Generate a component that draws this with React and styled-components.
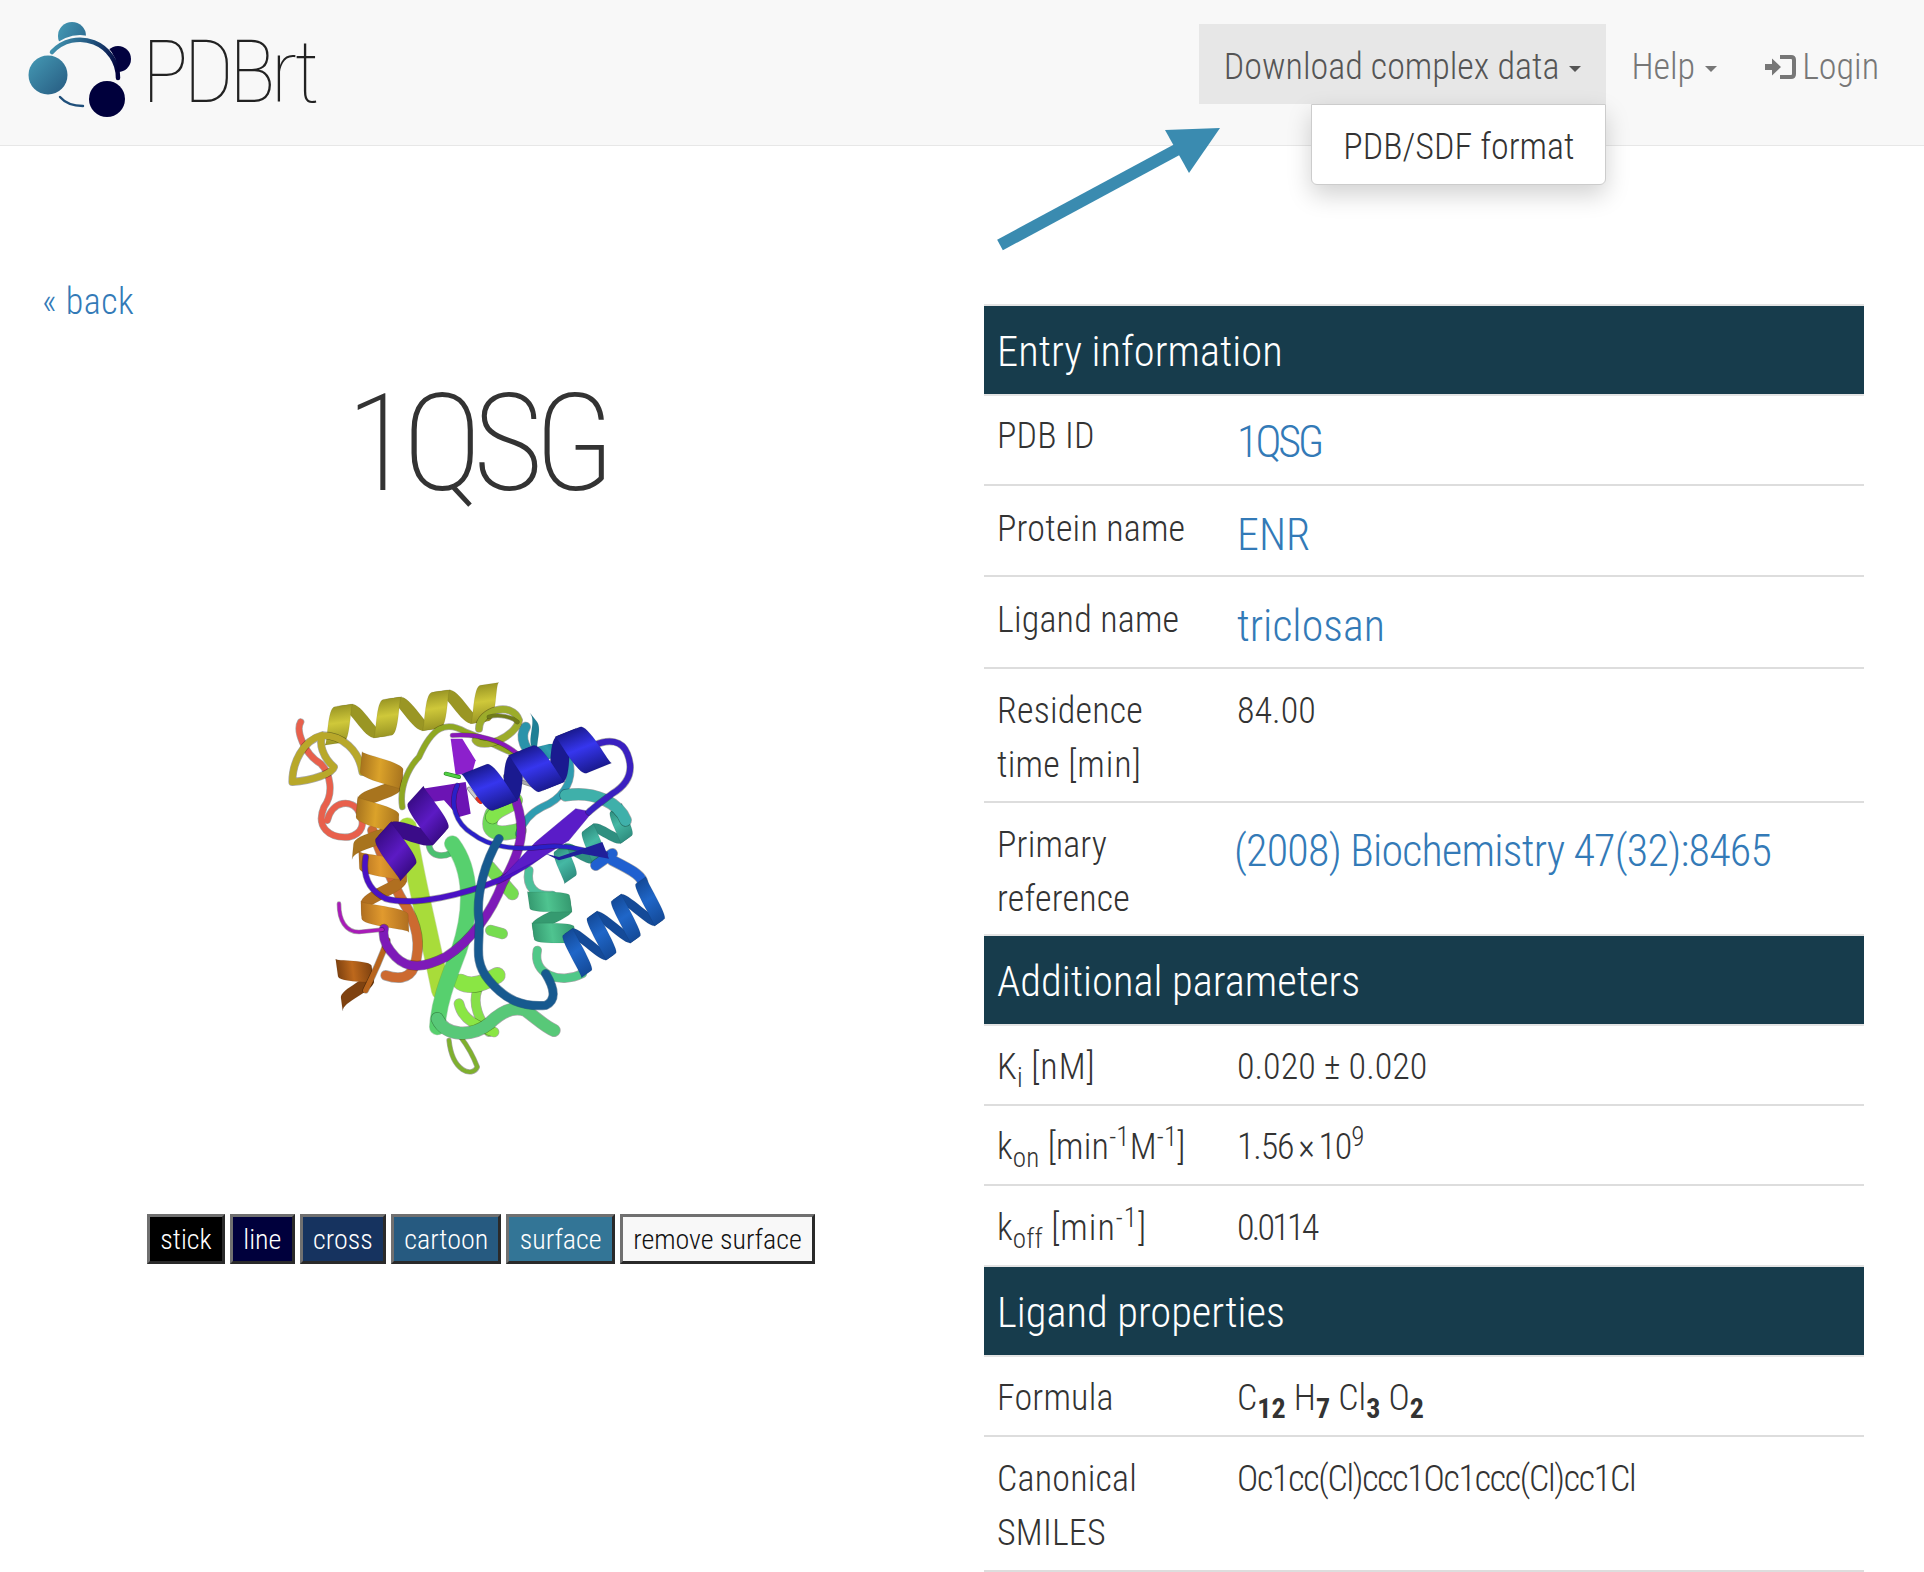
import React from 'react';
import styled, { createGlobalStyle } from 'styled-components';

const Global = createGlobalStyle`
  html, body { margin: 0; padding: 0; background: #fff; }
  body { font-family: "Roboto", "Liberation Sans", sans-serif; font-weight: 300; font-stretch: 75%; color: #333; overflow-x: hidden; }
`;
const Page = styled.div`position: relative; width: 1924px; height: 1572px; overflow: hidden;`;
const Navbar = styled.header`
  height: 146px; box-sizing: border-box; background: #f8f8f8; border-bottom: 1px solid #e7e7e7;
  display: flex; align-items: flex-start; justify-content: space-between; padding: 24px 45px 0 28px;
`;
const Brand = styled.div`display: flex; align-items: center; gap: 2px; margin-top: -2px;`;
const BrandName = styled.span`
  font-size: 88px; font-weight: 100; color: #222; line-height: 100px; letter-spacing: -5px;
`;
const NavList = styled.nav`display: flex; align-items: stretch; height: 80px;`;
const NavItem = styled.div`
  position: relative; display: flex; align-items: center; gap: ${p => p.$gap ?? 10}px; padding: 6px ${p => p.$pr ?? 25}px 0 ${p => p.$pl ?? 25}px;
  background: ${p => (p.$open ? '#e7e7e7' : 'transparent')}; color: ${p => (p.$open ? '#555' : '#777')};
  font-size: 36px; white-space: nowrap;
`;
const Caret = styled.i`
  display: inline-block; width: 0; height: 0; border-top: 6px solid currentColor;
  border-left: 6px solid transparent; border-right: 6px solid transparent; margin-top: 4px;
`;
const Dropdown = styled.div`
  position: absolute; top: 80px; right: 0; width: 295px; height: 81px; box-sizing: border-box; padding-top: 4px;
  background: #fff; border: 1px solid #ccc; border-radius: 0 0 6px 6px;
  box-shadow: 0 10px 24px rgba(0,0,0,.18); display: flex; align-items: center; justify-content: center;
  font-size: 36px; color: #333; z-index: 3;
`;
const Arrow = styled.svg`position: absolute; left: 990px; top: 120px; z-index: 4;`;
const Main = styled.main`display: grid; grid-template-columns: 962px 880px; column-gap: 22px; padding-top: 160px;`;
const LeftCol = styled.section`display: flex; flex-direction: column; align-items: center;`;
const Back = styled.a`
  align-self: flex-start; margin: -29px 0 0 42px; color: #337ab7; font-size: 36px; line-height: 50px; letter-spacing: .5px;
`;
const Title = styled.h1`
  margin: 42px 10px 0 0; font-size: 135px; font-weight: 200; line-height: 150px; color: #333; letter-spacing: -9px;
`;
const Protein = styled.svg`display: block; margin: 138px 25px 0 0;`;
const Buttons = styled.div`display: flex; gap: 5px; margin-top: 127px;`;
const ViewButton = styled.button`
  height: 50px; padding: 0 10.3px; box-sizing: border-box; border-width: 3px; border-style: solid;
  border-color: #707070 #2a2a2a #2a2a2a #707070;
  background: ${p => p.$bg}; color: ${p => (p.$dark ? '#111' : '#fff')};
  font: 300 28px "Roboto", sans-serif; font-stretch: 75%;
`;
const Table = styled.table`width: 880px; border-collapse: collapse; table-layout: fixed; margin-top: -2px; align-self: start;`;
const Head = styled.th`
  height: 86px; padding: 2px 13px 0; background: #173c4c; color: #fff; text-align: left;
  font-size: 42.5px; font-weight: 300; border-top: 2px solid #e4e4e4; border-bottom: 2px solid #e4e4e4;
`;
const Row = styled.tr`border-bottom: 2px solid #ddd;`;
const Label = styled.td`
  height: ${p => p.$h}px; padding: ${p => p.$top ?? 14}px 13px 0; box-sizing: border-box; vertical-align: top; font-size: 36px; line-height: 54px; color: #333; letter-spacing: .2px;
`;
const Value = styled.td`
  padding: ${p => p.$top ?? 14}px 14px 0 ${p => p.$left || 14}px; vertical-align: top; font-size: 36px; line-height: 54px; color: #333;
  letter-spacing: ${p => p.$ls || 0}px; word-spacing: ${p => p.$ws || 0}px;
`;
const Link = styled.a`color: #337ab7; font-size: 44px; position: relative; top: 6px; letter-spacing: ${p => p.$ls || 0}px;`;
const Unit = styled.span`letter-spacing: 1px;`;
const Sub = styled.sub`font-size: ${p => (p.$bold ? 28 : 27)}px; line-height: 0; font-weight: ${p => (p.$bold ? 700 : 300)};`;
const Sup = styled.sup`font-size: 27px; line-height: 0;`;

function helix(ax, ay, bx, by, turns, r, w, front, back) {
  const dx = bx - ax, dy = by - ay, len = Math.hypot(dx, dy), nx = -dy / len, ny = dx / len, tx = dx / len, ty = dy / len;
  const N = Math.ceil(turns * 2), out = [], f = 0.32;
  for (let s = 0; s < N; s++) {
    const isFront = s % 2 === 0, up = [], down = [], k = Math.floor(s / 2);
    let cx = 0, cy = 0;
    for (let i = 0; i <= 16; i++) {
      const u = i / 16, a = isFront ? k + f * u : k + f + (1 - f) * u, t = a / turns, ph = Math.PI * (s + u);
      const o = Math.cos(ph) * r, thick = w * (isFront ? 0.85 + 0.15 * Math.sin(Math.PI * u) : 0.65);
      const x = ax + dx * t + nx * o, y = ay + dy * t + ny * o;
      if (i === 8) { cx = x; cy = y; }
      up.push([x + tx * thick / 2, y + ty * thick / 2]);
      down.push([x - tx * thick / 2, y - ty * thick / 2]);
    }
    out.push({
      id: `h${Math.round(ax)}_${Math.round(ay)}_${s}`, f: isFront,
      x1: cx + nx * r, y1: cy + ny * r, x2: cx - nx * r, y2: cy - ny * r,
      points: [...up, ...down.reverse()].map(p => p.map(v => v.toFixed(1)).join(',')).join(' '),
      fill: isFront ? front : back,
    });
  }
  return [...out.filter(o => !o.f), ...out.filter(o => o.f)];
}
const H = ({ a }) => helix(...a).map(p => (
  <g key={p.id}>
    <linearGradient id={p.id} gradientUnits="userSpaceOnUse" x1={p.x1} y1={p.y1} x2={p.x2} y2={p.y2}>
      <stop offset="0" stopColor={a[8]} />
      <stop offset={p.f ? 0.45 : 0.5} stopColor={p.fill} />
      <stop offset="1" stopColor={a[8]} />
    </linearGradient>
    <polygon points={p.points} fill={`url(#${p.id})`} stroke="#00000022" strokeWidth="1.5" strokeLinejoin="round" />
  </g>
));
const S = ({ d, c, w, e }) => (
  <>
    <path d={d} fill="none" stroke={e || '#00000055'} strokeWidth={w + 4} strokeLinecap="round" strokeLinejoin="round" />
    <path d={d} fill="none" stroke={c} strokeWidth={w} strokeLinecap="round" strokeLinejoin="round" />
  </>
);

const ProteinArt = () => (
  <Protein width="420" height="430" viewBox="0 0 1260 1290" aria-label="1QSG protein structure">
    <S d="M125 195C110 220 135 290 185 320C215 350 225 410 195 450C170 510 210 545 270 540C310 530 320 500 300 465C280 425 220 430 205 490" c="#e8604c" w={18} />
    <S d="M655 1000C640 1040 660 1090 690 1125" c="#86e048" w={26} />
    <S d="M700 470C680 520 700 540 780 520" c="#6ed858" w={42} />
    <S d="M770 430C760 450 720 450 700 480" c="#82e54c" w={40} />
    <S d="M690 630L760 710" c="#76dc50" w={36} />
    <S d="M695 820L730 830" c="#76dc50" w={30} />
    <S d="M605 975C640 995 680 975 715 955" c="#8ae644" w={46} />
    <S d="M600 1040C610 1090 660 1110 705 1125" c="#8ae644" w={28} />
    <S d="M510 560C510 600 560 610 600 570" c="#4cc070" w={16} />
    <S d="M800 210C780 240 800 290 830 290" c="#2a93aa" w={28} />
    <H a={[880, 300, 800, 200, 1, 30, 48, '#2f9cb0', '#1f7f95', '#1a6f85']} />
    <H a={[1100, 490, 890, 640, 2.5, 48, 50, '#45b8a4', '#2f8f80', '#257568']} />
    <S d="M930 310C950 380 900 430 850 450C810 470 790 500 780 530" c="#2f9cb0" w={20} />
    <S d="M920 415C1010 400 1080 440 1100 490" c="#3fb0aa" w={34} />
    <S d="M810 640C800 690 830 720 880 715" c="#4cc09a" w={24} />
    <H a={[870, 720, 890, 860, 1.5, 62, 60, '#4fc490', '#359a70', '#2a8060']} />
    <S d="M835 880C820 950 900 985 970 950" c="#50c888" w={24} />
    <S d="M1010 625L1060 590M1060 610C1120 640 1160 660 1150 690" c="#2060d0" w={30} />
    <H a={[1185, 725, 930, 905, 3.5, 68, 44, '#1f66c8', '#144a98', '#0f3a80']} />

    <S d="M445 510C460 630 500 780 545 1000" c="#a8dc3a" w={54} e="#6f9a2055" />
    <S d="M580 560C640 640 640 760 600 880C570 960 540 1030 535 1110" c="#57d06e" w={46} e="#2f8a4055" />
    <S d="M570 1150C580 1245 640 1262 655 1230C640 1190 620 1160 605 1140" c="#7fb02e" w={12} />
    <S d="M535 1085C560 1140 640 1140 690 1100C720 1070 760 1045 800 1060C840 1090 860 1110 885 1120" c="#58c878" w={36} />

    <S d="M340 520C370 600 400 680 430 730C470 790 490 860 465 930C450 970 410 965 380 955" c="#cc6a30" w={28} />
    <H a={[700, 135, 190, 210, 3.5, 55, 66, '#cfc83a', '#9a9624', '#7d7a18']} />
    <S d="M190 235C130 250 100 320 100 375C160 370 220 350 225 330C190 300 180 260 190 235C250 235 300 280 310 345" c="#b8a82a" w={20} />
    <H a={[370, 320, 345, 590, 2, 64, 72, '#dba22a', '#a8741e', '#9a6814']} />
    <H a={[370, 605, 380, 830, 1.5, 70, 62, '#e19a2e', '#b06f20', '#a06014']} />
    <H a={[285, 925, 300, 1035, 1, 52, 62, '#bd681c', '#7f4210', '#703a0c']} />
    <S d="M385 850C360 920 340 960 320 1000" c="#b8641c" w={16} />

    <S d="M430 450C420 390 450 330 480 300C520 210 560 190 620 225C690 250 730 280 770 290" c="#8fa822" w={16} />
    <S d="M660 215C660 160 760 130 780 190C770 240 670 280 650 250" c="#9cac2a" w={20} />
    <S d="M690 180C720 170 760 180 775 195" c="#707c18" w={10} />

    <S d="M580 235C660 230 730 250 780 295" c="#8818b8" w={12} />
    <polygon points="575,245 610,245 650,310 640,345 590,355" fill="#8c20cc" />
    <polygon points="490,395 620,375 635,470 600,480 555,430 480,440" fill="#6c14b4" />
    <S d="M560 350L600 360" c="#50d040" w={8} e="#2a802a" />
    <S d="M740 358L820 372" c="#c8c8c8" w={12} e="#888" />
    <S d="M790 375L820 385" c="#aaa" w={8} e="#888" />
    <S d="M630 395L660 432" c="#ccc" w={8} e="#888" />
    <S d="M655 425L665 435" c="#e03020" w={8} e="#e03020" />

    <S d="M760 400C800 500 800 560 730 680C700 760 640 850 560 900C500 930 450 940 410 900C380 870 370 840 375 815" c="#7d1ab8" w={26} />
    <S d="M240 740C240 790 260 825 300 825L370 818" c="#a81cb8" w={10} />

    <S d="M320 600C310 660 330 700 380 725C470 750 620 710 720 670C800 630 860 590 900 540" c="#4a12c4" w={16} />
    <H a={[395, 600, 540, 440, 1.5, 70, 82, '#5c1ac4', '#3a0c88', '#2e0a70']} />
    <polygon points="950,455 1000,465 930,550 835,610 725,665 830,555" fill="#5a1cc8" stroke="#33109055" strokeWidth="3" />
    <S d="M1005 265C1050 245 1090 250 1105 290C1125 340 1110 380 1060 410C1020 440 1000 455 990 465" c="#3a20c0" w={18} />

    <S d="M595 385C570 440 590 500 640 530C690 570 770 580 850 570C930 560 980 585 1040 590" c="#2a20c8" w={12} />
    <polygon points="860,590 900,600 1030,555 1050,605 970,590 900,610" fill="#20209a" />
    <H a={[670, 400, 1020, 260, 2.5, -68, 96, '#3636ee', '#1a1a90', '#15157a']} />

    <S d="M720 545C680 610 650 710 660 790C665 860 640 910 690 970C740 1030 790 1050 860 1045C890 1030 890 1000 860 950" c="#17598f" w={24} e="#0e3c6688" />
  </Protein>
);

const Logo = () => (
  <svg width="112" height="100" viewBox="0 0 112 100" aria-label="PDBrt logo">
    <defs>
      <linearGradient id="lg" gradientUnits="userSpaceOnUse" x1="52" y1="40" x2="118" y2="70">
        <stop offset="0" stopColor="#459ab5" />
        <stop offset="0.55" stopColor="#1f4f7a" />
        <stop offset="1" stopColor="#00003c" />
      </linearGradient>
      <linearGradient id="lc" x1="0" y1="0" x2="1" y2="1">
        <stop offset="0" stopColor="#459ab5" />
        <stop offset="1" stopColor="#265a80" />
      </linearGradient>
      <linearGradient id="lb" x1="0" y1="0" x2="1" y2="0.5">
        <stop offset="0" stopColor="#459ab5" />
        <stop offset="1" stopColor="#2f6f94" />
      </linearGradient>
    </defs>
    <g transform="translate(-28 -24)">
      <circle cx="72" cy="38" r="14" fill="url(#lb)" />
      <circle cx="118" cy="61" r="13" fill="#02023f" />
      <circle cx="80" cy="75" r="38" fill="#f8f8f8" />
      <path d="M52 54A38 38 0 0 1 118 80" fill="none" stroke="url(#lg)" strokeWidth="4.5" strokeLinecap="round" />
      <circle cx="48" cy="77" r="19.5" fill="url(#lc)" />
      <circle cx="107" cy="101" r="18" fill="#00003c" />
      <path d="M60 99C66 106 74 108 83 108" fill="none" stroke="#1f4f7a" strokeWidth="2.4" strokeLinecap="round" />
    </g>
  </svg>
);

const LoginIcon = () => (
  <svg width="32" height="26" viewBox="0 0 32 26" aria-hidden="true">
    <path d="M1 10H8V4.5L17 13L8 21.5V16H1Z" fill="#777" />
    <path d="M16 3H27C29 3 30 4 30 6V20C30 22 29 23 27 23H16" fill="none" stroke="#777" strokeWidth="4" />
  </svg>
);

const sections = [
  { head: 'Entry information', rows: [
    { h: 90, top: 13, label: 'PDB ID', value: <Link $ls={-3}>1QSG</Link> },
    { h: 91, top: 16, label: 'Protein name', value: <Link>ENR</Link> },
    { h: 92, top: 16, label: 'Ligand name', value: <Link>triclosan</Link> },
    { h: 134, top: 15, label: <>Residence<br />time <Unit>[min]</Unit></>, value: '84.00' },
    { h: 133, top: 15, label: <>Primary<br />reference</>, value: <Link $ls={-0.75}>(2008) Biochemistry 47(32):8465</Link>, left: 11 },
  ] },
  { head: 'Additional parameters', rows: [
    { h: 80, label: <>K<Sub>i</Sub> <Unit>[nM]</Unit></>, value: '0.020 ± 0.020' },
    { h: 80, label: <>k<Sub>on</Sub> [min<Sup>-1</Sup>M<Sup>-1</Sup>]</>, value: <>1.56 × 10<Sup>9</Sup></>, ls: -1.2, ws: -2 },
    { h: 81, top: 15, label: <>k<Sub>off</Sub> <Unit>[min<Sup>-1</Sup>]</Unit></>, value: '0.0114', ls: -2.8 },
  ] },
  { head: 'Ligand properties', rows: [
    { h: 80, label: 'Formula', value: <>C<Sub $bold>12</Sub> H<Sub $bold>7</Sub> Cl<Sub $bold>3</Sub> O<Sub $bold>2</Sub></> },
    { h: 135, top: 15, label: <>Canonical<br />SMILES</>, value: 'Oc1cc(Cl)ccc1Oc1ccc(Cl)cc1Cl', ls: -1.3 },
  ] },
];

const buttons = [
  ['stick', '#000'], ['line', '#00003c'], ['cross', '#16335f'], ['cartoon', '#265a80'], ['surface', '#337596'], ['remove surface', '#f8f8f8', true],
];

export default function App() {
  return (
    <Page>
      <Global />
      <Navbar>
        <Brand>
          <Logo />
          <BrandName>PDBrt</BrandName>
        </Brand>
        <NavList>
          <NavItem $open>
            Download complex data <Caret />
            <Dropdown>PDB/SDF format</Dropdown>
          </NavItem>
          <NavItem>Help <Caret /></NavItem>
          <NavItem $pl={22} $pr={0} $gap={6}><LoginIcon />Login</NavItem>
        </NavList>
      </Navbar>
      <Arrow width="240" height="140" viewBox="0 0 240 140" aria-hidden="true">
        <path d="M10 125L190 28" stroke="#3a8bb0" strokeWidth="12" />
        <polygon points="175,10 230,8 199,53" fill="#3a8bb0" />
      </Arrow>
      <Main>
        <LeftCol>
          <Back>« back</Back>
          <Title>1QSG</Title>
          <ProteinArt />
          <Buttons>
            {buttons.map(([t, bg, dark]) => <ViewButton key={t} $bg={bg} $dark={dark}>{t}</ViewButton>)}
          </Buttons>
        </LeftCol>
        <Table>
          <colgroup><col style={{ width: 239 }} /><col /></colgroup>
          <tbody>
            {sections.map(s => (
              <React.Fragment key={s.head}>
                <tr><Head colSpan={2}>{s.head}</Head></tr>
                {s.rows.map((r, i) => (
                  <Row key={i}>
                    <Label $h={r.h} $top={r.top}>{r.label}</Label>
                    <Value $top={r.top} $left={r.left} $ls={r.ls} $ws={r.ws}>{r.value}</Value>
                  </Row>
                ))}
              </React.Fragment>
            ))}
          </tbody>
        </Table>
      </Main>
    </Page>
  );
}
